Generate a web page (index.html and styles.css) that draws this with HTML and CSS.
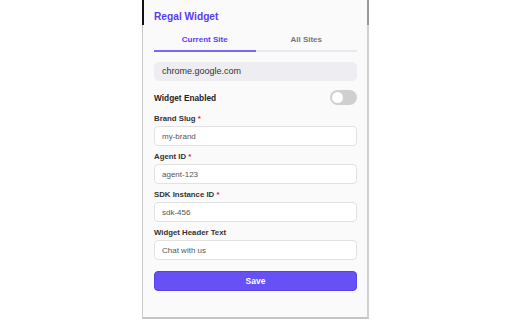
FILE: index.html
```html
<!DOCTYPE html>
<html lang="en">
<head>
    <meta charset="UTF-8">
    <meta name="viewport" content="width=device-width, initial-scale=1.0">
    <title>Regal Widget</title>
    <link rel="stylesheet" href="styles.css">
</head>
<body>
    <div class="popup">
        <h1 class="title">Regal Widget</h1>

        <div class="tabs">
            <div class="tab active">Current Site</div>
            <div class="tab">All Sites</div>
        </div>

        <div class="site-box">chrome.google.com</div>

        <div class="toggle-row">
            <span class="toggle-label">Widget Enabled</span>
            <span class="switch"><span class="knob"></span></span>
        </div>

        <div class="field">
            <label>Brand Slug <span class="req">*</span></label>
            <input type="text" value="my-brand">
        </div>
        <div class="field">
            <label>Agent ID <span class="req">*</span></label>
            <input type="text" value="agent-123">
        </div>
        <div class="field">
            <label>SDK Instance ID <span class="req">*</span></label>
            <input type="text" value="sdk-456">
        </div>
        <div class="field">
            <label>Widget Header Text</label>
            <input type="text" value="Chat with us">
        </div>

        <button class="save">Save</button>
    </div>
</body>
</html>
```

FILE: styles.css
```css
body {
    margin: 0;
    background: #fff;
    font-family: 'Liberation Sans', Arial, sans-serif;
    color: #222;
}
.popup {
    position: relative;
    box-sizing: border-box;
    width: 227px;
    height: 319px;
    margin-left: 142px;
    padding: 8px 10px 0 11px;
    background: #fafafa;
    border: 1px solid #c8c8c8;
    border-top: none;
    border-bottom: 2px solid #c4c4c4;
    border-right: 2px solid #d0d0d0;
}
.popup::before {
    content: '';
    position: absolute;
    left: -1px;
    top: 0;
    width: 2px;
    height: 25px;
    background: #111;
}
.popup::after {
    content: '';
    position: absolute;
    right: -2px;
    top: 0;
    width: 2px;
    height: 25px;
    background: #999;
}
.title {
    margin: 0;
    font-size: 10.2px;
    line-height: 17px;
    font-weight: bold;
    color: #5a3cf0;
}
.tabs {
    display: flex;
    margin-top: 7px;
}
.tab {
    flex: 1;
    text-align: center;
    font-size: 8px;
    line-height: 11px;
    font-weight: bold;
    color: #777;
    padding: 2px 0 5px;
    border-bottom: 2px solid #e8e8ee;
}
.tab.active {
    color: #5a3cf0;
    border-bottom-color: #7b66f7;
}
.site-box {
    margin-top: 10px;
    height: 19px;
    line-height: 19px;
    padding: 0 8px;
    background: #ededf2;
    border-radius: 5px;
    font-size: 9px;
    color: #333;
}
.toggle-row {
    display: flex;
    justify-content: space-between;
    align-items: center;
    margin-top: 9px;
    height: 15px;
}
.toggle-label {
    font-size: 8.3px;
    font-weight: bold;
}
.switch {
    display: flex;
    align-items: center;
    width: 27px;
    height: 15px;
    border-radius: 8px;
    background: #cfcfcf;
    padding: 0 2px;
    box-sizing: border-box;
}
.knob {
    width: 11px;
    height: 11px;
    border-radius: 50%;
    background: #fff;
}
.field {
    margin-top: 6px;
}
.toggle-row + .field {
    margin-top: 9px;
}
.field label {
    display: block;
    font-size: 7.8px;
    font-weight: bold;
    line-height: 10px;
    color: #333;
}
.req {
    color: #d22;
}
.field input {
    display: block;
    box-sizing: border-box;
    width: 100%;
    height: 20px;
    margin-top: 2px;
    padding: 0 7px;
    border: 1px solid #e2e2e2;
    border-radius: 4px;
    background: #fff;
    font-family: inherit;
    font-size: 8px;
    color: #555;
}
.save {
    display: block;
    width: 100%;
    height: 20px;
    margin-top: 11px;
    border: 1px solid #5a40e8;
    border-radius: 4px;
    background: #6650f6;
    color: #fff;
    font-family: inherit;
    font-size: 8.5px;
    font-weight: bold;
}
```
